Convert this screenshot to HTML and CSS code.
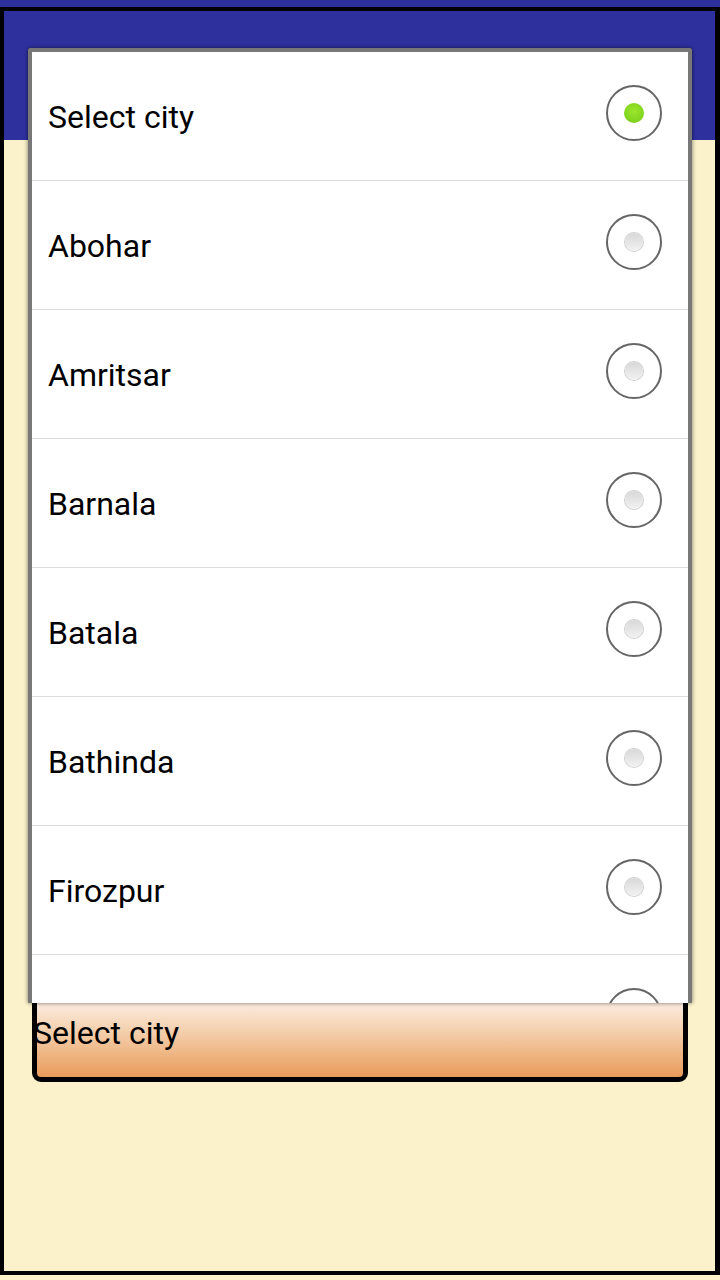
FILE: index.html
```html
<!DOCTYPE html>
<html>
<head>
<meta charset="utf-8">
<link rel="stylesheet" href="styles.css">
</head>
<body>
<div class="topstrip"></div>
<div class="frame">
  <div class="header"></div>
  <div class="content">
    <div class="spinner"><span class="spinner-text">Select city</span></div>
  </div>
</div>
<div class="dialog">
  <ul class="list">
    <li class="row"><span class="label">Select city</span><span class="radio checked"><span class="dot"></span></span></li>
    <li class="row"><span class="label">Abohar</span><span class="radio"><span class="dot"></span></span></li>
    <li class="row"><span class="label">Amritsar</span><span class="radio"><span class="dot"></span></span></li>
    <li class="row"><span class="label">Barnala</span><span class="radio"><span class="dot"></span></span></li>
    <li class="row"><span class="label">Batala</span><span class="radio"><span class="dot"></span></span></li>
    <li class="row"><span class="label">Bathinda</span><span class="radio"><span class="dot"></span></span></li>
    <li class="row"><span class="label">Firozpur</span><span class="radio"><span class="dot"></span></span></li>
    <li class="row"><span class="label"></span><span class="radio"><span class="dot"></span></span></li>
  </ul>
</div>
</body>
</html>
```

FILE: styles.css
```css
html, body {
  margin: 0;
  padding: 0;
  width: 720px;
  height: 1280px;
  background: #fbf2cb;
  font-family: Roboto, "Liberation Sans", sans-serif;
  overflow: hidden;
}
.topstrip {
  height: 7px;
  background: #2e309e;
}
.frame {
  box-sizing: border-box;
  width: 720px;
  height: 1268px;
  border-style: solid;
  border-color: #000;
  border-width: 4px 5px 4px 4px;
  background: #fbf2cb;
  display: flex;
  flex-direction: column;
}
.header {
  height: 129px;
  background: #2e309e;
}
.content {
  padding: 850px 27px 0 28px;
}
.spinner {
  box-sizing: border-box;
  height: 92px;
  border: 5px solid #000;
  border-radius: 0 0 9px 9px;
  background: linear-gradient(to bottom, #fdf3ec 0%, #f5d3b3 40%, #e99c5a 100%);
  display: flex;
  align-items: flex-end;
  padding-bottom: 28px;
}
.spinner-text {
  font-size: 32px;
  color: #000;
  margin-left: -4px;
  line-height: 32px;
}
.dialog {
  position: absolute;
  left: 28px;
  top: 48px;
  width: 664px;
  height: 955px;
  box-sizing: border-box;
  border: 4px solid #787878;
  border-bottom: none;
  border-radius: 3px 3px 0 0;
  background: #fff;
  box-shadow: 0 0 4px rgba(0, 0, 0, 0.55);
  overflow: hidden;
}
.list {
  list-style: none;
  margin: 0;
  padding: 0;
}
.row {
  height: 128px;
  border-bottom: 1px solid #dcdcdc;
  display: flex;
  align-items: center;
  justify-content: space-between;
  padding: 0 26px 0 16px;
}
.label {
  font-size: 32px;
  color: #000;
  margin-top: 2px;
}
.radio {
  box-sizing: border-box;
  width: 56px;
  height: 56px;
  border: 2px solid #666;
  border-radius: 50%;
  display: flex;
  align-items: center;
  justify-content: center;
  margin-bottom: 6px;
}
.dot {
  width: 18px;
  height: 18px;
  border-radius: 50%;
  background: linear-gradient(to bottom, #d8d8d8, #f2f2f2);
  box-shadow: 0 0 0 1px #cfcfcf;
}
.radio.checked .dot {
  width: 20px;
  height: 20px;
  background: radial-gradient(circle at 50% 40%, #9be62e 0%, #7fd31c 70%, #6cc012 100%);
  box-shadow: none;
}
```
